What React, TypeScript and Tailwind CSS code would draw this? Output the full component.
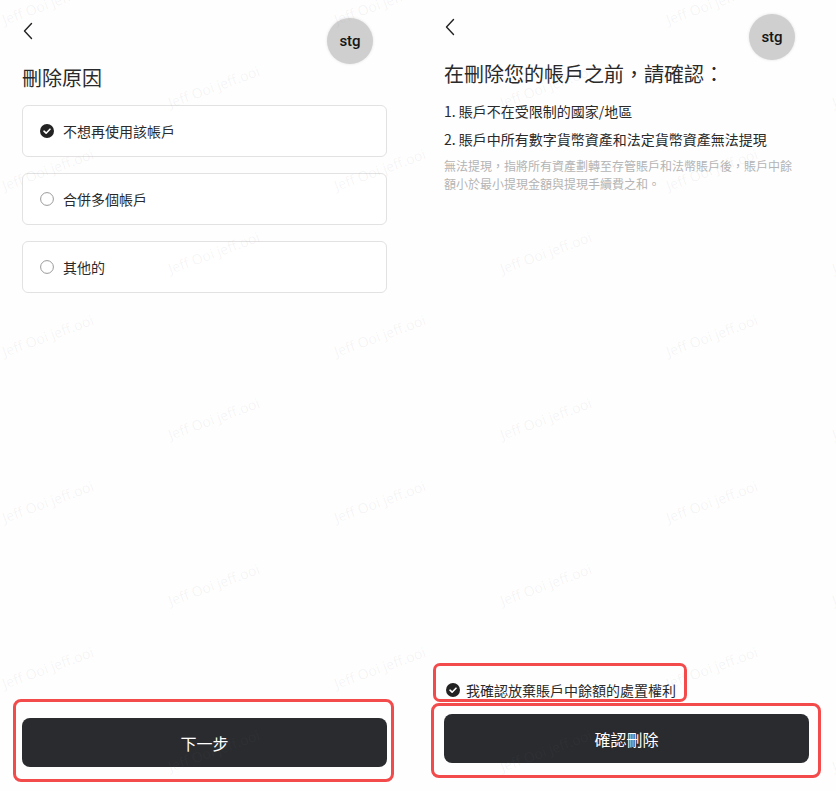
import React from "react";

const CJK = { fontFamily: '"Noto Sans CJK TC", "Noto Sans", sans-serif' };

function Chevron() {
  return (
    <svg width="10" height="18" viewBox="0 0 10 18" fill="none">
      <path d="M8.5 1.5 L1.5 9 L8.5 16.5" stroke="#222" strokeWidth="1.4" strokeLinecap="round" strokeLinejoin="round" />
    </svg>
  );
}

function Avatar() {
  return (
    <div className="w-[46px] h-[46px] rounded-full bg-[#cfcfcf] shadow-[0_0_3px_rgba(0,0,0,0.12)] flex items-center justify-center">
      <span className="text-[15px] font-medium text-[#151515]" style={{ fontFamily: 'Roboto, "Noto Sans", sans-serif' }}>stg</span>
    </div>
  );
}

function CheckedIcon() {
  return (
    <svg width="14" height="14" viewBox="0 0 14 14">
      <circle cx="7" cy="7" r="7" fill="#232323" />
      <path d="M4 7.2 L6.1 9.2 L10 5.2" stroke="#fff" strokeWidth="1.6" fill="none" strokeLinecap="round" strokeLinejoin="round" />
    </svg>
  );
}

function EmptyIcon() {
  return (
    <svg width="14" height="14" viewBox="0 0 14 14">
      <circle cx="7" cy="7" r="6.4" fill="none" stroke="#9a9a9a" strokeWidth="1" />
    </svg>
  );
}

function Option({ label, checked }: { label: string; checked?: boolean }) {
  return (
    <div className="h-[52px] rounded-[6px] border border-[#e2e2e2] bg-white flex items-center pl-[17px] gap-[9px]">
      {checked ? <CheckedIcon /> : <EmptyIcon />}
      <span className="text-[14px] text-[#2a2a2a]">{label}</span>
    </div>
  );
}

function Watermarks() {
  const items: { x: number; y: number }[] = [];
  for (let i = 0; i < 6; i++) {
    const cx = 48 + 166 * i;
    const start = i % 2 === 0 ? 4 : 87;
    for (let cy = start; cy < 860; cy += 166) items.push({ x: cx, y: cy });
  }
  return (
    <div className="absolute inset-0 pointer-events-none overflow-hidden">
      {items.map((p, k) => (
        <span
          key={k}
          className="absolute w-[120px] text-center text-[14px] leading-[20px] whitespace-nowrap text-[rgba(120,120,120,0.07)] -rotate-[20deg]"
          style={{ left: p.x - 60, top: p.y - 10, fontFamily: '"Open Sans", sans-serif' }}
        >
          Jeff Ooi jeff.ooi
        </span>
      ))}
    </div>
  );
}

export default function App() {
  return (
    <div className="relative w-[836px] h-[791px] bg-[#fefefe] flex overflow-hidden" style={CJK}>
      {/* Left panel */}
      <div className="w-[422px] h-full pl-[22px] pt-[18px] pb-[24px] flex flex-col">
        <div className="w-[365px] flex justify-between items-start">
          <div className="mt-[4px] ml-[1px]"><Chevron /></div>
          <div className="mr-[14px]"><Avatar /></div>
        </div>
        <div className="text-[20px] leading-[28px] text-[#2a2a2a] mt-0">刪除原因</div>
        <div className="w-[365px] mt-[13px] flex flex-col gap-[16px]">
          <Option label="不想再使用該帳戶" checked />
          <Option label="合併多個帳戶" />
          <Option label="其他的" />
        </div>
        <div className="flex-1" />
        <div className="relative w-[365px]">
          <div className="absolute left-[-9px] top-[-19px] w-[381px] h-[83px] border-[3px] border-[#f34b4b] rounded-[8px]" />
          <button className="w-full h-[49px] rounded-[8px] bg-[#2a2b2f] text-white text-[16px]">下一步</button>
        </div>
      </div>

      {/* Right panel */}
      <div className="flex-1 h-full pl-[22px] pt-[14px] pb-[28px] flex flex-col">
        <div className="w-[365px] flex justify-between items-start">
          <div className="mt-[4px] ml-[1px]"><Chevron /></div>
          <div className="mr-[14px]"><Avatar /></div>
        </div>
        <div className="text-[20px] leading-[28px] text-[#2a2a2a]">在刪除您的帳戶之前，請確認：</div>
        <div className="mt-[13px] flex flex-col gap-[8px] text-[14px] leading-[20px] text-[#2a2a2a]">
          <div>1. 賬戶不在受限制的國家/地區</div>
          <div>2. 賬戶中所有數字貨幣資產和法定貨幣資產無法提現</div>
        </div>
        <div className="mt-[8px] text-[12px] leading-[18px] text-[#b4b4b4]">
          無法提現，指將所有資產劃轉至存管賬戶和法幣賬戶後，賬戶中餘
          <br />
          額小於最小提現金額與提現手續費之和。
        </div>
        <div className="flex-1" />
        <div className="relative flex items-center gap-[6px] ml-[2px] h-[20px]">
          <div className="absolute left-[-13px] top-[-17px] w-[254px] h-[39px] border-[3px] border-[#f34b4b] rounded-[7px]" />
          <CheckedIcon />
          <span className="text-[14px] text-[#2a2a2a]">我確認放棄賬戶中餘額的處置權利</span>
        </div>
        <div className="relative w-[365px] mt-[14px]">
          <div className="absolute left-[-13px] top-[-11px] w-[390px] h-[75px] border-[3px] border-[#f34b4b] rounded-[8px]" />
          <button className="w-full h-[49px] rounded-[8px] bg-[#2a2b2f] text-white text-[16px]">確認刪除</button>
        </div>
      </div>

      <Watermarks />
    </div>
  );
}
